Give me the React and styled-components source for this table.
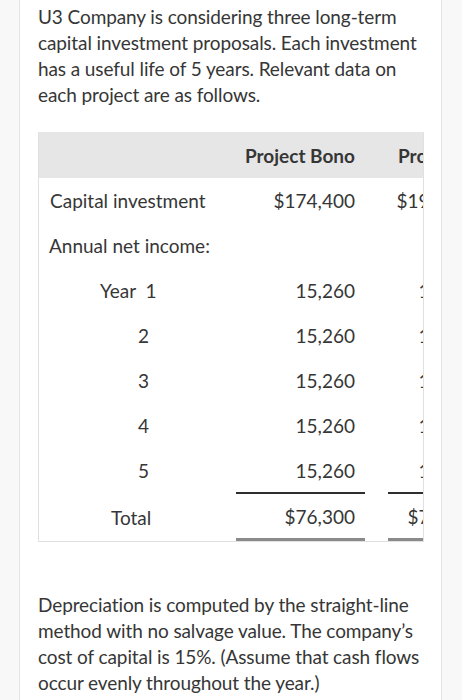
import styled, { createGlobalStyle } from 'styled-components'

const Global = createGlobalStyle`
body {
    margin: 0;
    background: #f8f8f8;
    font-family: Lato, "Open Sans", sans-serif;
    color: #363636;
}
`

const Card = styled.div`
margin-left: 19px;
width: 423px;
min-height: 700px;
background: #fff;
border-left: 1px solid #e4e4e4;
border-right: 1px solid #e4e4e4;
padding: 4px 18px 0 18px;
box-sizing: border-box;
`

const Para = styled.p`
margin: 0;
font-size: 19px;
line-height: 26px;
letter-spacing: -0.1px;
`

const TableBox = styled.div`
margin-top: 24px;
width: 386px;
overflow: hidden;
border-left: 1px solid #e0e0e0;
border-right: 1px solid #e0e0e0;
border-bottom: 1px solid #e0e0e0;
box-sizing: border-box;
`

const Row = styled.div`
display: grid;
grid-template-columns: 174px 129px 100px;
column-gap: 23px;
height: ${p => p.$h || 45}px;
align-items: center;
background: ${p => p.$head ? '#e6e6e6' : 'transparent'};
font-size: 19px;
font-weight: ${p => p.$head ? 700 : 400};
white-space: nowrap;
`

const Label = styled.div`
padding-left: ${p => p.$indent || 11}px;
`

const Num = styled.div`
align-self: stretch;
display: flex;
align-items: center;
justify-content: ${p => p.$left ? 'flex-start' : 'flex-end'};
padding: ${p => p.$left ? '0 0 0 10px' : '0 10px 0 0'};
border-top: ${p => p.$over ? '2px solid #2e2e2e' : 'none'};
border-bottom: ${p => p.$double ? '3px solid #8a8a8a' : 'none'};
margin-top: ${p => p.$over ? '-1px' : '0'};
`

const Lower = styled(Para)`
margin-top: 50px;
`

const rows = [
    ['Year\u00a0 1', 61, '15,260', '14,400'],
    ['2', 99, '15,260', '14,400'],
    ['3', 99, '15,260', '14,400'],
    ['4', 99, '15,260', '14,400'],
    ['5', 99, '15,260', '14,400'],
]

const App = () => {
    return (
        <>
            <Global />
            <Card>
                <Para>
                    U3 Company is considering three long-term capital investment proposals. Each investment has a useful life of 5 years. Relevant data on each project are as follows.
                </Para>
                <TableBox>
                    <Row $head $h={46}>
                        <Label />
                        <Num>Project Bono</Num>
                        <Num $left>Project Edge</Num>
                    </Row>
                    <Row>
                        <Label>Capital investment</Label>
                        <Num>$174,400</Num>
                        <Num>$190,000</Num>
                    </Row>
                    <Row>
                        <Label $indent={10}>Annual net income:</Label>
                        <Num />
                        <Num />
                    </Row>
                    {rows.map(([name, indent, a, b]) => (
                        <Row key={name}>
                            <Label $indent={indent}>{name}</Label>
                            <Num>{a}</Num>
                            <Num>{b}</Num>
                        </Row>
                    ))}
                    <Row $h={48}>
                        <Label $indent={72}>Total</Label>
                        <Num $over $double>$76,300</Num>
                        <Num $over $double>$72,000</Num>
                    </Row>
                </TableBox>
                <Lower>
                    Depreciation is computed by the straight-line method with no salvage value. The company’s cost of capital is 15%. (Assume that cash flows occur evenly throughout the year.)
                </Lower>
            </Card>
        </>
    )
}

export default App
